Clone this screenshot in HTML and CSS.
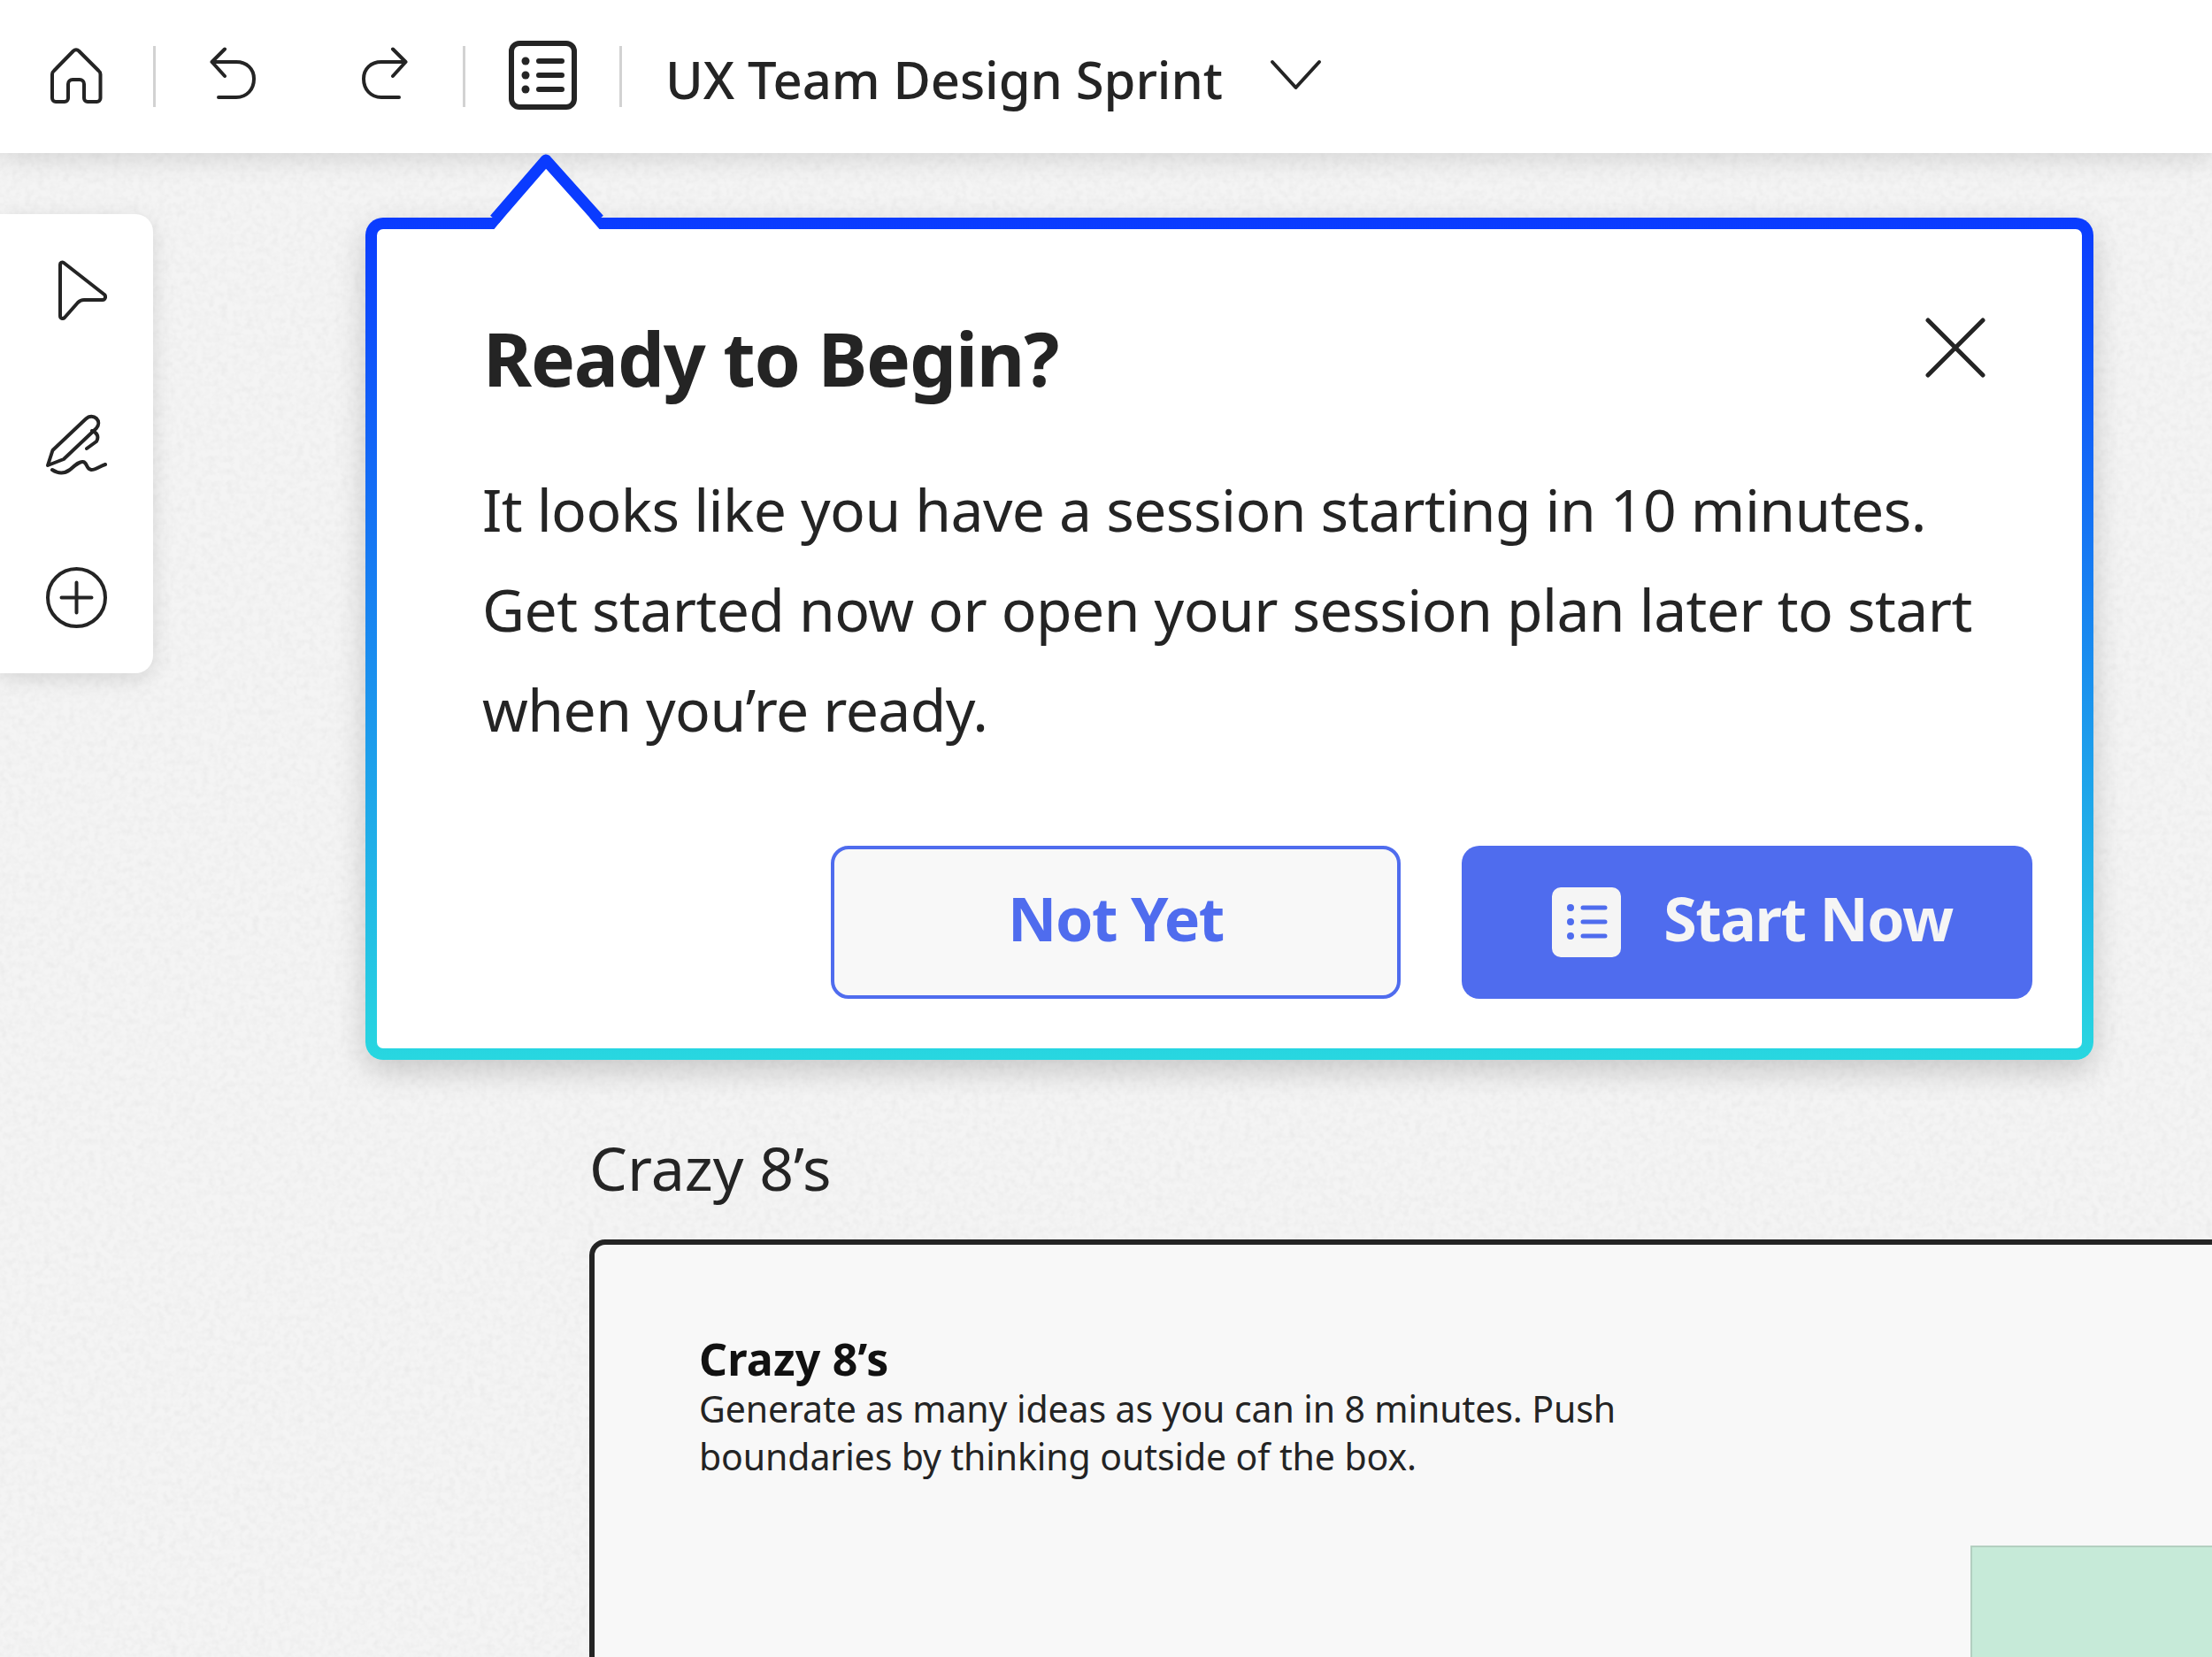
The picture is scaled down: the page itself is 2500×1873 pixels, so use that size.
FILE: index.html
```html
<!DOCTYPE html>
<html lang="en">
<head>
    <meta charset="UTF-8">
    <meta name="viewport" content="width=device-width, initial-scale=1.0">
    <title>UX Team Design Sprint</title>
    <link rel="stylesheet" href="styles.css">
</head>
<body>
    <header class="topbar">
        <button class="icon-btn home-btn" aria-label="Home">
            <svg width="60" height="65" viewBox="0 0 60 65" class="line-icon">
                <path d="M27 4.500a4 4 0 0 1 6 0L55.500 27a5 5 0 0 1 2 4V58a4 4 0 0 1-4 4H43a4 4 0 0 1-4-4V42a5 5 0 0 0-5-5H26a5 5 0 0 0-5 5V58a4 4 0 0 1-4 4H7a4 4 0 0 1-4-4V31a5 5 0 0 1 2-4Z"/>
            </svg>
        </button>
        <span class="sep sep-home"></span>
        <button class="icon-btn undo-btn" aria-label="Undo">
            <svg width="52" height="60" viewBox="0 0 52 60" class="line-icon">
                <path d="M17 2.500 2.500 17 17 33M2.500 17H30C42 17 50 25 50 36 50 48 42 57 30 57H10"/>
            </svg>
        </button>
        <button class="icon-btn redo-btn" aria-label="Redo">
            <svg width="52" height="60" viewBox="0 0 52 60" class="line-icon">
                <path d="M35 2.500 49.500 17 35 33M49.500 17H22C10 17 2 25 2 36 2 48 10 57 22 57H42"/>
            </svg>
        </button>
        <span class="sep sep-redo"></span>
        <button class="icon-btn plan-btn" aria-label="Session plan">
            <svg width="77" height="78" viewBox="0 0 77 78">
                <rect x="3" y="3" width="71" height="72" rx="9" fill="none" stroke="#242424" stroke-width="6"/>
                <circle cx="19" cy="23" r="4.500" fill="#242424"/>
                <circle cx="19" cy="39" r="4.500" fill="#242424"/>
                <circle cx="19" cy="55" r="4.500" fill="#242424"/>
                <path d="M34 23H60M34 39H60M34 55H60" fill="none" stroke="#242424" stroke-width="6" stroke-linecap="round"/>
            </svg>
        </button>
        <span class="sep sep-plan"></span>
        <span class="board-title">UX Team Design Sprint</span>
        <button class="icon-btn chevron-btn" aria-label="Board menu">
            <svg width="59" height="36" viewBox="0 0 59 36" class="line-icon">
                <path d="M3 3 29.500 32 56 3"/>
            </svg>
        </button>
    </header>

    <main class="board">
        <svg class="grain" width="100%" height="100%" aria-hidden="true">
            <filter id="paper">
                <feTurbulence type="fractalNoise" baseFrequency="0.14" numOctaves="2" seed="4"/>
                <feColorMatrix values="0 0 0 0 0.6  0 0 0 0 0.6  0 0 0 0 0.6  0.25 0.25 0 0 -0.2"/>
            </filter>
            <rect width="100%" height="100%" filter="url(#paper)"/>
        </svg>

        <div class="section">
            <h2 class="section-title">Crazy 8’s</h2>
            <div class="frame">
                <h3 class="frame-title">Crazy 8’s</h3>
                <p class="frame-text">Generate as many ideas as you can in 8 minutes. Push<br>boundaries by thinking outside of the box.</p>
                <div class="sticky"></div>
            </div>
        </div>

        <nav class="tools">
            <button class="icon-btn" aria-label="Select">
                <svg width="56" height="69" viewBox="0 0 56 69" class="line-icon pointer-icon">
                    <path d="M3 5C3 3 5 2 7 3L53 39C55 41 54 45 51 45H30C27 45 25 46 23 48L8 65C6 67 3 66 3 63Z"/>
                </svg>
            </button>
            <button class="icon-btn" aria-label="Pen">
                <svg width="69" height="70" viewBox="0 0 69 70" class="line-icon">
                    <path d="M2 59 7.500 42 45 6.500C49 2.500 54 3 57 6 60 9 60 13.500 57 17L20 52Z"/>
                    <path d="M52 20C58 22 60 27 57 32L46 40M7 64C13 68 20 69 27 64 33 59 38 54 42 55 47 56 45 63 51 64 55 64.500 61 60 67 58"/>
                </svg>
            </button>
            <button class="icon-btn" aria-label="Add">
                <svg width="69" height="69" viewBox="0 0 69 69" class="line-icon">
                    <circle cx="34.500" cy="34.500" r="32.500"/>
                    <path d="M34.500 17.500V51.500M17.500 34.500H51.500"/>
                </svg>
            </button>
        </nav>

        <section class="popup">
            <svg class="popup-notch" width="150" height="100" viewBox="0 0 150 100">
                <path class="notch-fill" d="M14 94 75 20 138 94Z"/>
                <path class="notch-line" d="M17 80 75 13 135 80"/>
            </svg>
            <div class="popup-head">
                <h1 class="popup-title">Ready to Begin?</h1>
                <button class="icon-btn close-btn" aria-label="Close">
                    <svg width="68" height="68" viewBox="0 0 68 68" class="line-icon close-icon">
                        <path d="M3 3 65 65M65 3 3 65"/>
                    </svg>
                </button>
            </div>
            <p class="popup-text">It looks like you have a session starting in 10 minutes.<br>Get started now or open your session plan later to start<br>when you’re ready.</p>
            <div class="popup-actions">
                <button class="btn btn-outline"><span class="btn-label">Not Yet</span></button>
                <button class="btn btn-solid">
                    <svg width="78" height="79" viewBox="0 0 78 79">
                        <rect width="78" height="79" rx="10" fill="#f5f5f5"/>
                        <circle cx="21" cy="23" r="4" fill="#4f6cee"/>
                        <circle cx="21" cy="39" r="4" fill="#4f6cee"/>
                        <circle cx="21" cy="55" r="4" fill="#4f6cee"/>
                        <path d="M35 23H60M35 39H60M35 55H60" fill="none" stroke="#4f6cee" stroke-width="5" stroke-linecap="round"/>
                    </svg>
                    <span class="btn-label">Start Now</span>
                </button>
            </div>
        </section>
    </main>
</body>
</html>
```

FILE: styles.css
```css
* {
    box-sizing: border-box;
}

html, body {
    margin: 0;
    height: 100%;
    overflow: hidden;
}

body {
    font-family: "Noto Sans", "Open Sans", sans-serif;
    color: #242424;
    display: flex;
    flex-direction: column;
}

button {
    font-family: inherit;
}

.icon-btn {
    background: none;
    border: none;
    padding: 0;
    display: flex;
    cursor: pointer;
}

.line-icon {
    fill: none;
    stroke: #242424;
    stroke-width: 4;
    stroke-linecap: round;
    stroke-linejoin: round;
}

/* top bar */
.topbar {
    height: 173px;
    flex-shrink: 0;
    background: white;
    display: flex;
    align-items: center;
    padding-left: 56px;
    position: relative;
    z-index: 3;
    box-shadow: 0 4px 30px rgba(0,0,0,0.14);
}

.sep {
    width: 3px;
    height: 69px;
    background: #d2d2d2;
}

.sep-home {
    margin: 0 61px 0 57px;
}

.sep-redo {
    margin: 0 49px 0 62px;
}

.sep-plan {
    margin: 0 49px 0 48px;
}

.undo-btn {
    margin-right: 120px;
}

.home-btn {
    margin-top: -3px;
}

.undo-btn, .redo-btn {
    margin-top: -8px;
}

.plan-btn {
    margin-top: -3px;
}

.board-title {
    font-size: 58px;
    letter-spacing: -0.1px;
    font-weight: 500;
    white-space: nowrap;
    margin-top: 5px;
}

.chevron-btn {
    margin-left: 53px;
    margin-top: -4px;
}

/* board */
.board {
    flex: 1;
    position: relative;
    background: #f4f4f4;
    padding: 0 0 0 666px;
    overflow: hidden;
}

.grain {
    position: absolute;
    inset: 0;
}

.section {
    position: relative;
    padding-top: 1102px;
    width: 2100px;
}

.section-title {
    font-size: 68px;
    font-weight: 400;
    line-height: 90px;
    margin: 0 0 36px;
}

.frame {
    position: relative;
    height: 700px;
    background: #f8f8f8;
    border: 6px solid #242424;
    border-radius: 18px;
    padding: 100px 118px;
}

.frame-title {
    font-size: 50px;
    font-weight: 700;
    line-height: 58px;
    letter-spacing: 0.2px;
    color: #111;
    margin: 0;
}

.frame-text {
    font-size: 41px;
    line-height: 54px;
    letter-spacing: -0.1px;
    margin: 0;
}

.sticky {
    position: absolute;
    left: 1555px;
    top: 340px;
    width: 500px;
    height: 400px;
    background: #c6ead8;
    border: 2px solid #b3cfc0;
    border-right: none;
    border-bottom: none;
}

/* left tools */
.tools {
    position: absolute;
    left: 0;
    top: 69px;
    width: 173px;
    height: 519px;
    background: white;
    border-radius: 0 20px 20px 0;
    box-shadow: 0 6px 24px rgba(0,0,0,0.12);
    display: flex;
    flex-direction: column;
    align-items: flex-start;
    padding: 52px 0 0 52px;
    gap: 104px;
}

.pointer-icon {
    margin-left: 13px;
}

/* popup */
.popup {
    position: absolute;
    left: 413px;
    top: 73px;
    width: 1953px;
    height: 952px;
    border: 13px solid transparent;
    border-radius: 20px;
    background:
        linear-gradient(white, white) padding-box,
        linear-gradient(180deg, #0a3bff, #28d7e0) border-box;
    box-shadow: 0 12px 34px rgba(0,0,0,0.18);
    padding: 96px 56px 56px 120px;
    z-index: 4;
}

.popup-notch {
    position: absolute;
    left: 116px;
    top: -91px;
    overflow: visible;
}

.notch-fill {
    fill: white;
}

.notch-line {
    fill: none;
    stroke: #0a3bff;
    stroke-width: 13;
    stroke-linejoin: round;
}

.popup-head {
    display: flex;
    justify-content: space-between;
    align-items: flex-start;
}

.popup-title {
    font-size: 84px;
    font-weight: 700;
    line-height: 100px;
    letter-spacing: -1.2px;
    margin: 0;
}

.close-btn {
    margin: 4px 53px 0 0;
}

.close-icon {
    stroke-width: 5;
}

.popup-text {
    font-size: 66px;
    line-height: 113px;
    letter-spacing: -0.57px;
    margin: 64px 0 0;
    margin-left: -1px;
    white-space: nowrap;
}

.popup-actions {
    display: flex;
    justify-content: flex-end;
    gap: 69px;
    margin-top: 98px;
}

.btn {
    width: 644px;
    height: 173px;
    border-radius: 20px;
    font-size: 68px;
    font-weight: 700;
    letter-spacing: -1.5px;
    color: #4f6cee;
    cursor: pointer;
    display: flex;
    align-items: center;
    justify-content: center;
    gap: 48px;
}

.btn-label {
    margin-bottom: 10px;
}

.btn-outline {
    background: #f8f8f8;
    border: 4px solid #4f6cee;
}

.btn-solid {
    width: 645px;
    background: #4f6cee;
    border: none;
    color: #f5f5f5;
    padding-left: 18px;
}
```
